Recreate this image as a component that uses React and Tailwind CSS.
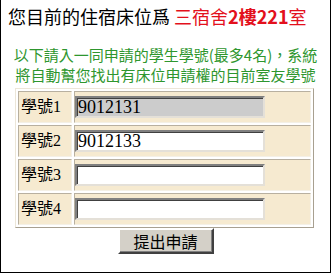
import React from "react";

// Roommate application form: current bed, up to four student IDs, submit.
const ROWS = [
  { label: "學號1", value: "9012131", locked: true },
  { label: "學號2", value: "9012133" },
  { label: "學號3", value: "" },
  { label: "學號4", value: "" },
];

const cjk = "font-['Noto_Sans_CJK_TC',sans-serif]";

function IdRow({ label, value, locked }) {
  return (
    <tr>
      <td className="w-[54px] h-[32px] p-0 pl-[2px] bg-[#f6ead0] border border-t-[#b8b0a0] border-l-[#b8b0a0] border-b-[#f4f0e6] border-r-[#f4f0e6] font-['Liberation_Serif','Noto_Sans_CJK_TC',serif] text-[16px] text-black">
        {label}
      </td>
      <td className="h-[32px] p-0 bg-[#f6ead0] border border-t-[#b8b0a0] border-l-[#b8b0a0] border-b-[#f4f0e6] border-r-[#f4f0e6]">
        <input
          readOnly
          defaultValue={value}
          className={`block w-[190px] h-[22px] px-[1px] border-2 border-t-[#808080] border-l-[#808080] border-b-[#e4e0d8] border-r-[#e4e0d8] shadow-[inset_1px_1px_0_#404040] font-['Liberation_Serif',serif] text-[18px] leading-[18px] text-black outline-none ${
            locked ? "bg-[#cccccc]" : "bg-white"
          }`}
        />
      </td>
    </tr>
  );
}

export default function App() {
  return (
    <div className={`w-[331px] h-[273px] bg-white border-x border-b border-black ${cjk}`}>
      <div className="pt-[4px] pl-[7px] text-[18px] leading-[24px] whitespace-nowrap text-black">
        您目前的住宿床位爲{" "}
        <span className="text-[#e3101c]">
          三宿舍<b className="font-bold">2樓221</b>室
        </span>
      </div>

      <div className="mt-[17px] text-center text-[15px] leading-[20px] text-[#2e962e] whitespace-nowrap">
        <div>以下請入一同申請的學生學號(最多4名)，系統</div>
        <div>將自動幫您找出有床位申請權的目前室友學號</div>
      </div>

      <div className="mt-[3px] flex flex-col items-center">
        <table className="w-[299px] ml-[-2px] border border-t-[#ece6d8] border-l-[#ece6d8] border-b-[#a8a090] border-r-[#a8a090] border-separate border-spacing-[2px]">
          <tbody>
            {ROWS.map((r) => (
              <IdRow key={r.label} {...r} />
            ))}
          </tbody>
        </table>
        <button className="w-[96px] h-[26px] bg-[#d4d0c8] border-2 border-t-white border-l-white border-b-[#404040] border-r-[#404040] shadow-[inset_-1px_-1px_0_#808080] text-[16px] leading-[20px] text-black">
          提出申請
        </button>
      </div>
    </div>
  );
}
